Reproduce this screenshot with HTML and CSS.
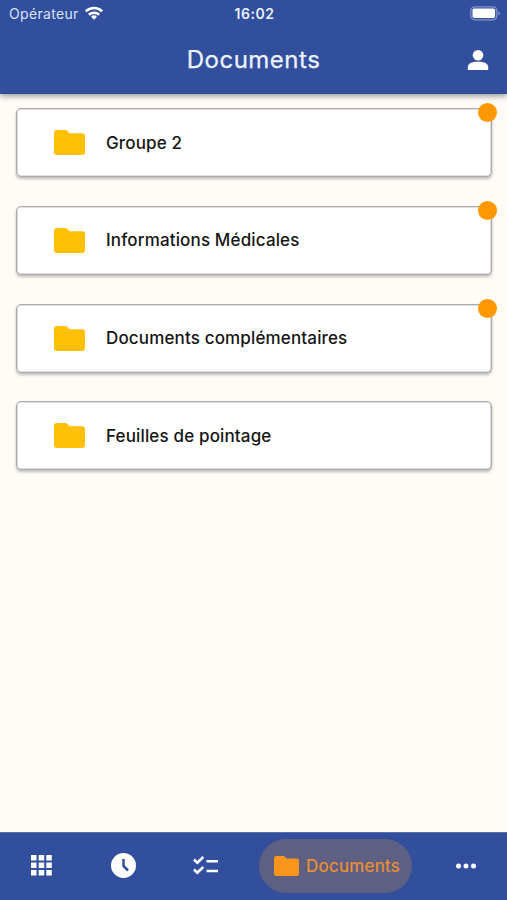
FILE: index.html
```html
<!DOCTYPE html>
<html lang="fr">
<head>
<meta charset="utf-8">
<meta name="viewport" content="width=device-width, initial-scale=1">
<title>Documents</title>
<link rel="stylesheet" href="styles.css">
</head>
<body>
<svg class="defs" aria-hidden="true">
  <symbol id="folder" viewBox="2 4 20 16"><path d="M10 4H3.700C2.800 4 2 4.800 2 5.700v12.600c0 1 .8 1.700 1.700 1.700h16.600c1 0 1.700-.7 1.700-1.700V7.700c0-1-.7-1.700-1.700-1.700H12z"/></symbol>
</svg>
<div class="app">
  <header class="header">
    <div class="status">
      <div class="carrier"><span>Opérateur</span>
        <svg class="wifi" viewBox="0 0 18 14"><g fill="none" stroke="#fff" stroke-width="2.600"><path d="M.9 5.300a11.600 11.600 0 0 1 16.200 0"/><path d="M3.900 8.800a7.300 7.300 0 0 1 10.200 0"/></g><path fill="#fff" d="M9 13.700l-2.900-3a4.200 4.200 0 0 1 5.800 0z"/></svg>
      </div>
      <div class="time">16:02</div>
      <svg class="battery" viewBox="0 0 31 15"><rect x=".8" y=".8" width="26" height="13" rx="4" fill="none" stroke="#8496cb" stroke-width="1.200"/><rect x="2.500" y="2.500" width="22.600" height="9.600" rx="1.800" fill="#fff"/><path d="M28.300 5.200q3.300 2.100 0 4.400z" fill="#8496cb"/></svg>
    </div>
    <div class="titlebar">
      <h1>Documents</h1>
      <svg class="user" viewBox="0 0 22 21"><ellipse cx="11" cy="5.300" rx="5.300" ry="5.300"/><path d="M.8 20v-2.700c0-4 4.200-5.600 10.200-5.600s10.200 1.600 10.200 5.600V20z"/></svg>
    </div>
  </header>
  <main class="list">
    <div class="card"><svg class="folder"><use href="#folder"/></svg><span>Groupe 2</span><i class="dot"></i></div>
    <div class="card"><svg class="folder"><use href="#folder"/></svg><span>Informations Médicales</span><i class="dot"></i></div>
    <div class="card"><svg class="folder"><use href="#folder"/></svg><span>Documents complémentaires</span><i class="dot"></i></div>
    <div class="card"><svg class="folder"><use href="#folder"/></svg><span>Feuilles de pointage</span></div>
  </main>
  <nav class="nav">
    <svg class="grid" viewBox="0 0 21 21"><path d="M0 0h5.500v5.500H0zM7.700 0h5.500v5.500H7.700zM15.300 0h5.500v5.500h-5.500zM0 7.500h5.500V13H0zM7.700 7.500h5.500V13H7.700zM15.300 7.500h5.500V13h-5.500zM0 15h5.500v5.500H0zM7.700 15h5.500v5.500H7.700zM15.300 15h5.500v5.500h-5.500z"/></svg>
    <svg class="clock" viewBox="0 0 25 25"><circle cx="12.500" cy="12.500" r="12.500"/><path d="M12.500 6v7l4.500 4.500" fill="none" stroke="#324f9d" stroke-width="2.500"/></svg>
    <svg class="checks" viewBox="0 0 26 20"><g fill="none" stroke="#fff" stroke-width="2.600"><path d="M1 3.500l3.300 3.200L10.300 1M1 13.500l3.300 3.200L10.300 11M13.500 5.200h11.500M13.500 15h11.500"/></g></svg>
    <div class="active"><svg class="folder"><use href="#folder"/></svg><span>Documents</span></div>
    <svg class="more" viewBox="0 0 20 6"><circle cx="2.500" cy="3" r="2.500"/><circle cx="10" cy="3" r="2.500"/><circle cx="17.500" cy="3" r="2.500"/></svg>
  </nav>
</div>
</body>
</html>
```
FILE: styles.css
```css
* { box-sizing: border-box; }
body { margin: 0; font-family: Inter, "Liberation Sans", sans-serif; }
svg { display: block; flex: none; fill: #fff; }
.defs { display: none; }
.app { display: flex; flex-direction: column; width: 507px; height: 900px; background: #fffcf8; }
.header { height: 94px; background: #324f9d; color: #edf2ff; box-shadow: 0 2px 6px rgba(0, 0, 0, .42); }
.status { display: grid; grid-template-columns: 1fr auto 1fr; align-items: center; height: 27px; padding: 0 6px 0 9px; }
.carrier { display: flex; align-items: center; gap: 6px; font-size: 14px; letter-spacing: .33px; color: #d9e2fb; }
.wifi { width: 18px; height: 14px; margin-top: -1px; }
.time { margin-right: 1px; font-size: 14px; font-weight: 600; letter-spacing: .5px; }
.battery { width: 31px; height: 15px; justify-self: end; margin-top: -1px; }
.titlebar { display: grid; grid-template-columns: 1fr auto 1fr; align-items: center; height: 66px; padding: 0 18px; }
h1 { grid-column: 2; margin: 0; font-size: 24px; font-weight: 400; line-height: 30px; letter-spacing: .5px; -webkit-text-stroke: .25px currentColor; }
.user { width: 22px; height: 21px; justify-self: end; }
.list { flex: 1; display: flex; flex-direction: column; gap: 28.8px; padding: 14px 15px 0 15.5px; }
.card { position: relative; display: flex; align-items: center; gap: 21px; height: 69px; padding-left: 37.5px; border: 1px solid #acacac; border-radius: 5px; background: #fff; box-shadow: inset 0 0 0 .6px #c4c4c4, 0 2px 3px rgba(0, 0, 0, .26); color: #151515; font-size: 17px; font-weight: 500; letter-spacing: .15px; }
.card .folder { width: 31px; height: 25px; fill: #ffc107; }
.dot { position: absolute; top: -6px; right: -6px; width: 19px; height: 19px; border-radius: 50%; background: #ff9800; }
.nav { display: flex; align-items: center; height: 68px; padding: 0 0 2px 31px; background: #324f9d; border-top: 1px solid #5870ae; }
.grid { width: 21px; height: 21px; }
.clock { width: 25px; height: 25px; margin-left: 59px; }
.checks { width: 26px; height: 20px; margin-left: 57px; }
.active { display: flex; align-items: center; gap: 7px; width: 153px; height: 54px; margin-left: 40px; padding-left: 15px; border-radius: 27px; background: #5d5f83; color: #ed922f; font-size: 17px; letter-spacing: .28px; -webkit-text-stroke: .2px currentColor; }
.active .folder { width: 25px; height: 20px; fill: #f8951d; }
.more { width: 20px; height: 6px; margin-left: 44px; }
```
